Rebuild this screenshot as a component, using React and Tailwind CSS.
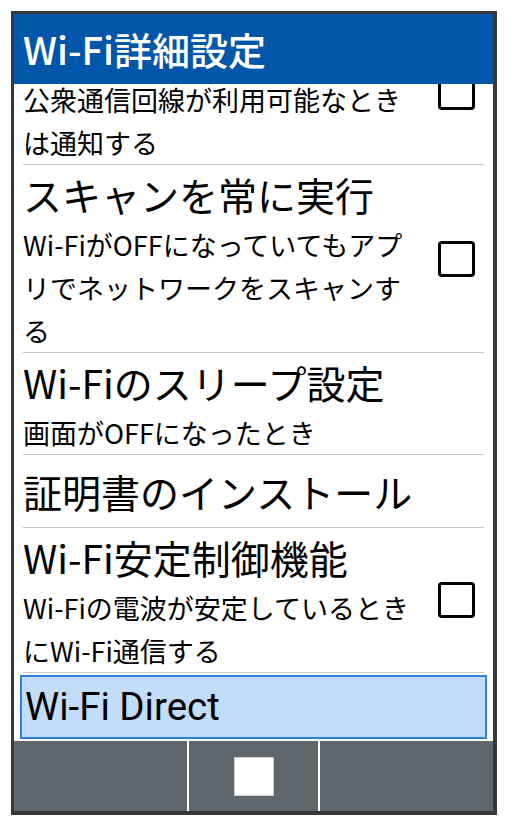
import React from "react";

const font = { fontFamily: '"Noto Sans CJK JP", "Noto Sans", sans-serif' };

function Checkbox() {
  return <div className="mr-[9px] ml-2 h-[36px] w-[37px] shrink-0 rounded-[4px] border-[3px] border-black" />;
}

function Item({ title, lines, checkbox }) {
  return (
    <div className="mx-[9px] flex items-center border-b border-[#c4c8c8]">
      <div className="flex-1">
        <div className="whitespace-nowrap text-[39px] leading-[58px] text-black">{title}</div>
        {lines.map((l) => (
          <div key={l} className="whitespace-nowrap text-[27px] leading-[43px] text-black">
            {l}
          </div>
        ))}
      </div>
      {checkbox && <Checkbox />}
    </div>
  );
}

export default function App() {
  return (
    <div className="h-[826px] w-[507px] bg-white pl-[11px] pt-[11px]" style={font}>
      <div className="flex h-[804px] w-[486px] flex-col border-[3px] border-r-4 border-b-4 border-[#383838]">
        <header className="relative z-10 flex h-[70px] shrink-0 items-center bg-[#0056a9] pl-[9px]">
          <h1 className="whitespace-nowrap text-[38px] font-medium leading-[48px] text-white">Wi-Fi詳細設定</h1>
        </header>

        <div className="flex-1 overflow-hidden">
          <div className="-mt-[64px]">
            <Item
              title="ネットワークの通知"
              lines={["公衆通信回線が利用可能なとき", "は通知する"]}
              checkbox
            />
            <Item
              title="スキャンを常に実行"
              lines={["Wi-FiがOFFになっていてもアプ", "リでネットワークをスキャンす", "る"]}
              checkbox
            />
            <Item title="Wi-Fiのスリープ設定" lines={["画面がOFFになったとき"]} />
            <div className="mx-[9px] flex h-[73px] items-center border-b border-[#c4c8c8]">
              <div className="whitespace-nowrap text-[39px] leading-[58px] text-black">証明書のインストール</div>
            </div>
            <Item
              title="Wi-Fi安定制御機能"
              lines={["Wi-Fiの電波が安定しているとき", "にWi-Fi通信する"]}
              checkbox
            />
            <div className="mx-[6px] mt-[2px] flex h-[64px] items-center border-2 border-[#2f7fe3] bg-[#c2ddf9] pl-[3px]">
              <span className="whitespace-nowrap text-[38.5px] leading-[48px] text-black" style={{ fontFamily: 'Roboto, "Noto Sans CJK JP", sans-serif' }}>
                Wi-Fi Direct
              </span>
            </div>
          </div>
        </div>

        <nav className="flex h-[71px] shrink-0 gap-[2px] border-t border-white bg-white">
          <div className="flex-1 bg-[#5f676d]" />
          <div className="flex w-[129px] items-center justify-center bg-[#5f676d]">
            <div className="h-[39px] w-[40px] border border-[#d0d0d0] bg-white" />
          </div>
          <div className="flex-1 bg-[#5f676d]" />
        </nav>
      </div>
    </div>
  );
}
